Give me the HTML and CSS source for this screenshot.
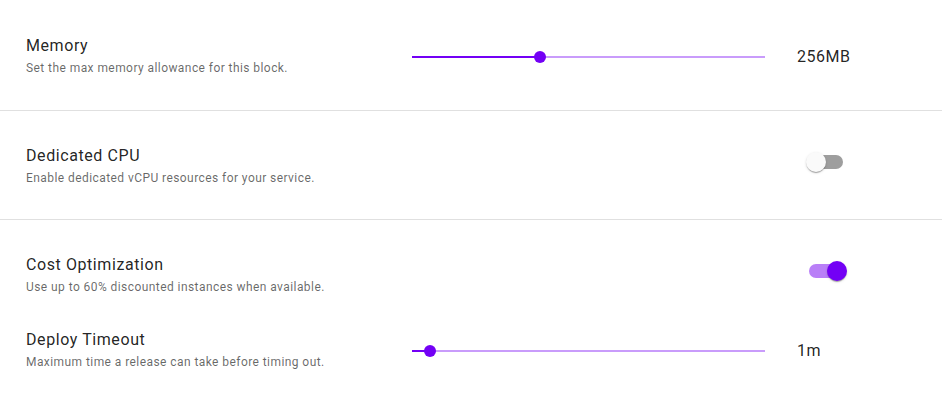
FILE: index.html
```html
<!DOCTYPE html>
<html lang="en">
<head>
<meta charset="utf-8">
<title>Settings</title>
<link rel="stylesheet" href="styles.css">
</head>
<body>
<div class="panel">
  <section class="section first">
    <div class="row">
      <div class="label">
        <div class="title">Memory</div>
        <div class="desc">Set the max memory allowance for this block.</div>
      </div>
      <div class="slider">
        <div class="rail"></div>
        <div class="fill" style="width:36.2%"></div>
        <div class="thumb" style="left:36.2%"></div>
      </div>
      <div class="value">256MB</div>
    </div>
  </section>
  <section class="section">
    <div class="row">
      <div class="label">
        <div class="title">Dedicated CPU</div>
        <div class="desc">Enable dedicated vCPU resources for your service.</div>
      </div>
      <div class="spacer"></div>
      <div class="control">
        <div class="switch">
          <span class="track"></span>
          <span class="knob"></span>
        </div>
      </div>
    </div>
  </section>
  <section class="section last">
    <div class="row">
      <div class="label">
        <div class="title">Cost Optimization</div>
        <div class="desc">Use up to 60% discounted instances when available.</div>
      </div>
      <div class="spacer"></div>
      <div class="control">
        <div class="switch on">
          <span class="track"></span>
          <span class="knob"></span>
        </div>
      </div>
    </div>
    <div class="row">
      <div class="label">
        <div class="title">Deploy Timeout</div>
        <div class="desc">Maximum time a release can take before timing out.</div>
      </div>
      <div class="slider">
        <div class="rail"></div>
        <div class="fill" style="width:5.1%"></div>
        <div class="thumb" style="left:5.1%"></div>
      </div>
      <div class="value">1m</div>
    </div>
  </section>
</div>
</body>
</html>
```

FILE: styles.css
```css
html, body {
  margin: 0;
  padding: 0;
  background: #ffffff;
}

body {
  font-family: Roboto, "Liberation Sans", Arial, sans-serif;
  color: rgba(0, 0, 0, 0.87);
}

.panel {
  width: 942px;
}

.section {
  padding: 17px 0 15px;
  border-bottom: 1px solid #e0e0e0;
}

.section.first {
  padding-top: 18px;
  padding-bottom: 16px;
}

.section.last {
  border-bottom: none;
}

.row {
  display: grid;
  grid-template-columns: 355px 353px 1fr;
  column-gap: 31px;
  align-items: center;
  padding: 16px 0 16px 26px;
}

.section.last .row + .row {
  padding-top: 15px;
}

.label {
  display: flex;
  flex-direction: column;
}

.title {
  font-size: 16px;
  line-height: 24px;
  letter-spacing: 0.58px;
  color: rgba(0, 0, 0, 0.87);
}

.desc {
  font-size: 12px;
  line-height: 20px;
  letter-spacing: 0.43px;
  color: rgba(0, 0, 0, 0.6);
}

.slider {
  position: relative;
  height: 12px;
  margin-top: 2px;
}

.rail {
  position: absolute;
  left: 0;
  right: 0;
  top: 5px;
  height: 2px;
  background: #c99cfb;
}

.fill {
  position: absolute;
  left: 0;
  top: 5px;
  height: 2px;
  background: #7300f5;
}

.thumb {
  position: absolute;
  top: 0;
  width: 12px;
  height: 12px;
  margin-left: -6px;
  border-radius: 50%;
  background: #7300f5;
}

.value {
  font-size: 16px;
  line-height: 24px;
  letter-spacing: 0.5px;
  margin-top: 2px;
  margin-left: 1px;
}

.control {
  display: flex;
  align-items: center;
  height: 44px;
}

.switch {
  position: relative;
  width: 58px;
  height: 38px;
  margin: -4px 0 4px 1px;
}

.switch .track {
  position: absolute;
  left: 12px;
  top: 12px;
  width: 34px;
  height: 14px;
  border-radius: 7px;
  background: #9e9e9e;
}

.switch .knob {
  position: absolute;
  left: 9px;
  top: 9px;
  width: 20px;
  height: 20px;
  border-radius: 50%;
  background: #fafafa;
  box-shadow: 0 2px 1px -1px rgba(0, 0, 0, 0.2), 0 1px 1px 0 rgba(0, 0, 0, 0.14), 0 1px 3px 0 rgba(0, 0, 0, 0.12);
}

.switch.on .track {
  background: #b97ff7;
}

.switch.on .knob {
  left: 30px;
  background: #7300f5;
}
```
